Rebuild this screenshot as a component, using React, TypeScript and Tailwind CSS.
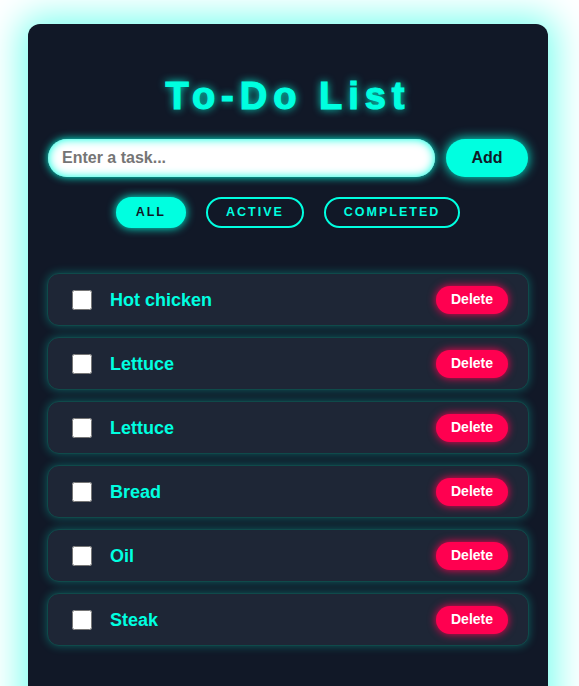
import { useState } from 'react';

type Filter = 'all' | 'active' | 'completed';

interface Task {
  id: number;
  text: string;
  done: boolean;
}

const initialTasks: Task[] = [
  { id: 1, text: 'Hot chicken', done: false },
  { id: 2, text: 'Lettuce', done: false },
  { id: 3, text: 'Lettuce', done: false },
  { id: 4, text: 'Bread', done: false },
  { id: 5, text: 'Oil', done: false },
  { id: 6, text: 'Steak', done: false },
];

export default function App() {
  const [tasks, setTasks] = useState<Task[]>(initialTasks);
  const [input, setInput] = useState('');
  const [filter, setFilter] = useState<Filter>('all');

  const addTask = () => {
    if (!input.trim()) return;
    setTasks([...tasks, { id: Date.now(), text: input.trim(), done: false }]);
    setInput('');
  };

  const visible = tasks.filter((t) =>
    filter === 'all' ? true : filter === 'active' ? !t.done : t.done
  );

  const filterBtn = (key: Filter, label: string) =>
    filter === key ? (
      <button
        onClick={() => setFilter(key)}
        className="h-[31px] px-[18px] rounded-full border-2 border-[#00ffe0] bg-[#00ffe0] text-[#111827] text-[12.5px] font-bold tracking-[2px] shadow-[0_0_10px_#00ffe0]"
      >
        {label}
      </button>
    ) : (
      <button
        onClick={() => setFilter(key)}
        className="h-[31px] px-[18px] rounded-full border-2 border-[#00ffe0] bg-transparent text-[#00ffe0] text-[12.5px] font-bold tracking-[2px]"
      >
        {label}
      </button>
    );

  return (
    <div className="min-h-screen bg-white pt-6 px-7 font-['Liberation_Sans',Arial,sans-serif]">
      <div className="w-[520px] min-h-[700px] bg-[#111827] rounded-xl shadow-[0_0_35px_8px_#7ffff0] px-5 pt-[46px] pb-10">
        <h1 className="text-center text-[38px] leading-[52px] font-bold tracking-[6px] text-[#00ffe0] [-webkit-text-stroke:1.2px_#00ffe0] [text-shadow:0_0_8px_#00ffe0]">
          To-Do List
        </h1>

        <div className="flex gap-[11px] mt-[17px]">
          <input
            value={input}
            onChange={(e) => setInput(e.target.value)}
            onKeyDown={(e) => e.key === 'Enter' && addTask()}
            placeholder="Enter a task..."
            className="flex-1 h-[38px] rounded-full bg-white px-[14px] text-[16px] font-bold text-[#111827] placeholder:text-[#757575] outline-none shadow-[inset_0_0_10px_#00ffe0,0_0_8px_#00ffe0]"
          />
          <button
            onClick={addTask}
            className="w-[82px] h-[38px] rounded-full bg-[#00ffe0] text-[#111827] text-[16px] font-bold shadow-[0_0_12px_#00ffe0]"
          >
            Add
          </button>
        </div>

        <div className="flex justify-center gap-5 mt-5">
          {filterBtn('all', 'ALL')}
          {filterBtn('active', 'ACTIVE')}
          {filterBtn('completed', 'COMPLETED')}
        </div>

        <ul className="mt-[45px] flex flex-col gap-[11px] -mx-px">
          {visible.map((t) => (
            <li
              key={t.id}
              className="h-[53px] flex items-center pl-6 pr-5 rounded-xl bg-[#1e2636] border border-[#0f4a4a] shadow-[0_0_10px_rgba(0,255,224,0.3)]"
            >
              <input
                type="checkbox"
                checked={t.done}
                onChange={() =>
                  setTasks(tasks.map((x) => (x.id === t.id ? { ...x, done: !x.done } : x)))
                }
                className="w-5 h-5 m-0"
              />
              <span
                className={`ml-[18px] flex-1 text-[18px] leading-none pt-px font-bold text-[#00ffe0] ${t.done ? 'line-through opacity-50' : ''}`}
              >
                {t.text}
              </span>
              <button
                onClick={() => setTasks(tasks.filter((x) => x.id !== t.id))}
                className="w-[72px] h-[28px] rounded-full bg-[#ff0050] text-white text-[14px] font-bold shadow-[0_0_8px_#ff0050]"
              >
                Delete
              </button>
            </li>
          ))}
        </ul>
      </div>
    </div>
  );
}
